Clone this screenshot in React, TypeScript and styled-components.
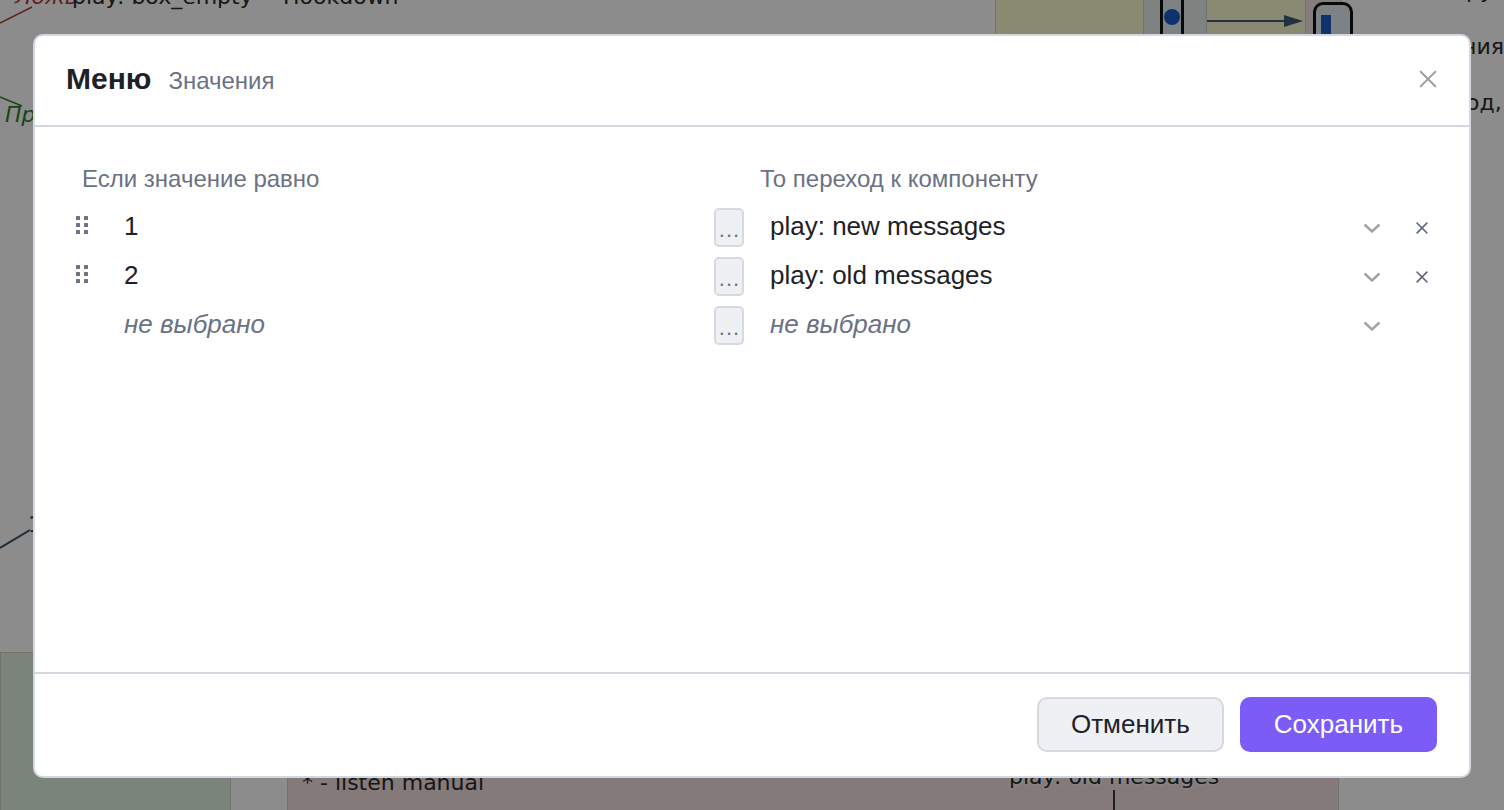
import React from "react"
import styled, { createGlobalStyle } from "styled-components"

const GlobalStyle = createGlobalStyle`
  html, body {
    margin: 0;
    padding: 0;
    height: 100%;
    overflow: hidden;
    font-family: "Liberation Sans", Arial, sans-serif;
  }
  #root { height: 100%; }
`

type Rule = { value?: string; target?: string; removable: boolean }

const rules: Rule[] = [
  { value: "1", target: "play: new messages", removable: true },
  { value: "2", target: "play: old messages", removable: true },
  { removable: false },
]

const DragHandle = () => (
  <svg width="14" height="20" viewBox="0 0 14 20">
    {[0, 7, 14].map((y) => (
      <React.Fragment key={y}>
        <rect x="1" y={y} width="4" height="4" rx="0.5" fill="#6b7385" />
        <rect x="9" y={y} width="4" height="4" rx="0.5" fill="#6b7385" />
      </React.Fragment>
    ))}
  </svg>
)

const Chevron = () => (
  <svg width="18" height="10" viewBox="0 0 18 10">
    <path d="M1.5 1.5 L9 8.5 L16.5 1.5" fill="none" stroke="#a3a3a3" strokeWidth="2.4" />
  </svg>
)

const Cross = ({ size, color, weight }: { size: number; color: string; weight: number }) => (
  <svg width={size} height={size} viewBox="0 0 20 20">
    <path d="M2 2 L18 18 M18 2 L2 18" stroke={color} strokeWidth={weight} strokeLinecap="square" />
  </svg>
)

export default function App() {
  return (
    <>
      <GlobalStyle />
      <S.Page>
        <Canvas />
        <S.Overlay>
          <S.Modal>
            <S.Header>
              <S.Title>Меню</S.Title>
              <S.Subtitle>Значения</S.Subtitle>
              <S.CloseButton>
                <Cross size={18} color="#9e9e9e" weight={2.2} />
              </S.CloseButton>
            </S.Header>

            <S.Body>
              <S.ColumnHeads>
                <S.ColumnHead width="678px">Если значение равно</S.ColumnHead>
                <S.ColumnHead>То переход к компоненту</S.ColumnHead>
              </S.ColumnHeads>

              {rules.map((r, i) => (
                <S.Row key={i}>
                  <S.Handle>{r.removable && <DragHandle />}</S.Handle>
                  <S.Cell placeholder={!r.value}>{r.value ?? "не выбрано"}</S.Cell>
                  <S.DotsButton>...</S.DotsButton>
                  <S.Cell placeholder={!r.target} indent>
                    {r.target ?? "не выбрано"}
                  </S.Cell>
                  <S.IconSlot>
                    <Chevron />
                  </S.IconSlot>
                  <S.IconSlot>
                    {r.removable && <Cross size={12} color="#5a6478" weight={2.6} />}
                  </S.IconSlot>
                </S.Row>
              ))}
            </S.Body>

            <S.Footer>
              <S.Button>Отменить</S.Button>
              <S.Button primary>Сохранить</S.Button>
            </S.Footer>
          </S.Modal>
        </S.Overlay>
      </S.Page>
    </>
  )
}

// the diagram editor that sits behind the dialog
const Canvas = () => (
  <S.Canvas>
    <S.Zone style={{ left: 995, top: -40, width: 345, height: 200 }} tone="#fbfbcf" />
    <S.Zone style={{ left: 1143, top: -40, width: 62, height: 200 }} tone="#e8f0ef" />
    <S.Zone style={{ left: 1305, top: -40, width: 35, height: 200 }} tone="#f2e4e4" />
    <S.Zone style={{ left: 0, top: 652, width: 229, height: 200 }} tone="#dff0df" />
    <S.Zone style={{ left: 287, top: 700, width: 1050, height: 200 }} tone="#f2dede" />

    <S.Block style={{ left: 1160, top: -10, width: 24, height: 60 }}>
      <S.Dot />
    </S.Block>
    <S.Block style={{ left: 1313, top: 2, width: 40, height: 60, borderRadius: 10 }}>
      <S.Bar />
    </S.Block>

    <S.Wires width="1504" height="810">
      <line x1="0" y1="23" x2="32" y2="7" stroke="#b43a3a" strokeWidth="1.5" />
      <line x1="0" y1="97" x2="22" y2="106" stroke="#2f7d32" strokeWidth="1.5" />
      <line x1="0" y1="548" x2="30" y2="530" stroke="#2f4f66" strokeWidth="2" />
      <line x1="1207" y1="21" x2="1296" y2="21" stroke="#3e5a70" strokeWidth="2" />
      <path d="M1284 15 L1303 21 L1284 27 Z" fill="#3e5a70" />
      <line x1="1114" y1="790" x2="1114" y2="810" stroke="#2f3e4c" strokeWidth="2" />
    </S.Wires>

    <S.Label style={{ left: 15, top: -16 }} color="#b43a3a" italic>
      Ложь
    </S.Label>
    <S.Label style={{ left: 72, top: -16 }}>play: box_empty</S.Label>
    <S.Label style={{ left: 283, top: -16 }}>Hookdown</S.Label>
    <S.Label style={{ left: 5, top: 102 }} color="#2f7d32" italic>
      Пр
    </S.Label>
    <S.Label style={{ left: 28, top: 512 }}>1</S.Label>
    <S.Label style={{ left: 1466, top: -22 }}>ру</S.Label>
    <S.Label style={{ left: 1462, top: 34 }}>ния</S.Label>
    <S.Label style={{ left: 1466, top: 90 }}>од,</S.Label>
    <S.Label style={{ left: 302, top: 770 }}>* - listen manual</S.Label>
    <S.Label style={{ left: 1009, top: 764 }} halo>
      play: old messages
    </S.Label>
  </S.Canvas>
)

const S = {
  Page: styled.div`
    position: relative;
    width: 100vw;
    height: 100vh;
    overflow: hidden;
    background: #ffffff;
  `,

  Canvas: styled.div`
    position: absolute;
    inset: 0;
  `,

  Zone: styled.div<{ tone: string }>`
    position: absolute;
    background: ${(p) => p.tone};
    border: 1px solid #d2d2c8;
  `,

  Block: styled.div`
    position: absolute;
    background: #e6edf3;
    border: 3px solid #111;
    border-radius: 4px;
    display: flex;
    justify-content: center;
    padding-top: 16px;
    box-sizing: border-box;
  `,

  Dot: styled.div`
    width: 16px;
    height: 16px;
    border-radius: 50%;
    background: #1c5bc9;
  `,

  Bar: styled.div`
    width: 10px;
    height: 40px;
    margin-left: -14px;
    margin-top: -6px;
    background: #1c5bc9;
  `,

  Wires: styled.svg`
    position: absolute;
    left: 0;
    top: 0;
  `,

  Label: styled.div<{ color?: string; italic?: boolean; halo?: boolean }>`
    position: absolute;
    font-family: "DejaVu Sans", sans-serif;
    font-size: 22px;
    white-space: nowrap;
    color: ${(p) => p.color ?? "#2a2a2a"};
    font-style: ${(p) => (p.italic ? "italic" : "normal")};
    text-shadow: ${(p) => (p.halo ? "0 0 3px #fff, 0 0 3px #fff" : "none")};
  `,

  Overlay: styled.div`
    position: absolute;
    inset: 0;
    background: rgba(0, 0, 0, 0.45);
    display: flex;
    justify-content: center;
    align-items: flex-start;
    padding-top: 34px;
  `,

  Modal: styled.div`
    width: 1438px;
    height: 744px;
    box-sizing: border-box;
    background: #fff;
    border: 2px solid #d3d7df;
    border-radius: 10px;
    display: flex;
    flex-direction: column;
    overflow: hidden;
  `,

  Header: styled.div`
    display: flex;
    align-items: center;
    height: 91px;
    box-sizing: border-box;
    padding: 0 32px 4px 31px;
    border-bottom: 2px solid #d3d7df;
    flex-shrink: 0;
  `,

  Title: styled.h2`
    margin: 0;
    font-size: 30px;
    font-weight: 700;
    color: #1d2128;
  `,

  Subtitle: styled.span`
    margin-left: 17px;
    margin-top: 4px;
    font-size: 24px;
    color: #6a7283;
  `,

  CloseButton: styled.button`
    margin-left: auto;
    border: none;
    background: none;
    padding: 0;
    display: flex;
    cursor: pointer;
  `,

  Body: styled.div`
    flex: 1;
    padding: 38px 33px 0 40px;
    display: flex;
    flex-direction: column;
    gap: 10px;
  `,

  ColumnHeads: styled.div`
    display: flex;
    padding-left: 7px;
    margin-bottom: 5px;
  `,

  ColumnHead: styled.div<{ width?: string }>`
    width: ${(p) => p.width ?? "auto"};
    font-size: 24px;
    line-height: 28px;
    color: #6a7283;
  `,

  Row: styled.div`
    display: grid;
    grid-template-columns: 49px 590px 30px 614px 28px 50px;
    align-items: center;
    height: 39px;
  `,

  Handle: styled.div`
    display: flex;
    justify-content: flex-start;
    margin-top: -4px;
  `,

  Cell: styled.div<{ placeholder?: boolean; indent?: boolean }>`
    font-size: 26px;
    margin-top: -2px;
    padding-left: ${(p) => (p.indent ? "26px" : "0")};
    color: ${(p) => (p.placeholder ? "#6a7283" : "#1d2128")};
    font-style: ${(p) => (p.placeholder ? "italic" : "normal")};
  `,

  DotsButton: styled.button`
    width: 30px;
    height: 39px;
    box-sizing: border-box;
    padding: 4px 0 0;
    border: 2px solid #d5d9e0;
    border-radius: 5px;
    background: #eef0f4;
    color: #6a7283;
    font-family: "Liberation Sans", Arial, sans-serif;
    font-size: 22px;
    letter-spacing: 1px;
    text-indent: 1px;
    cursor: pointer;
  `,

  IconSlot: styled.div`
    display: flex;
    justify-content: center;
    align-items: center;
    &:last-child {
      justify-content: flex-start;
      padding-left: 30px;
    }
  `,

  Footer: styled.div`
    display: flex;
    justify-content: flex-end;
    gap: 16px;
    padding: 23px 32px 24px;
    border-top: 2px solid #d3d7df;
    flex-shrink: 0;
  `,

  Button: styled.button<{ primary?: boolean }>`
    height: 55px;
    padding: 0 32px;
    border-radius: 10px;
    box-sizing: border-box;
    font-family: "Liberation Sans", Arial, sans-serif;
    font-size: 26px;
    cursor: pointer;
    border: 2px solid ${(p) => (p.primary ? "#7b5cf7" : "#d5d9e0")};
    background: ${(p) => (p.primary ? "#7b5cf7" : "#eef0f4")};
    color: ${(p) => (p.primary ? "#fff" : "#1d2128")};
  `,
}
